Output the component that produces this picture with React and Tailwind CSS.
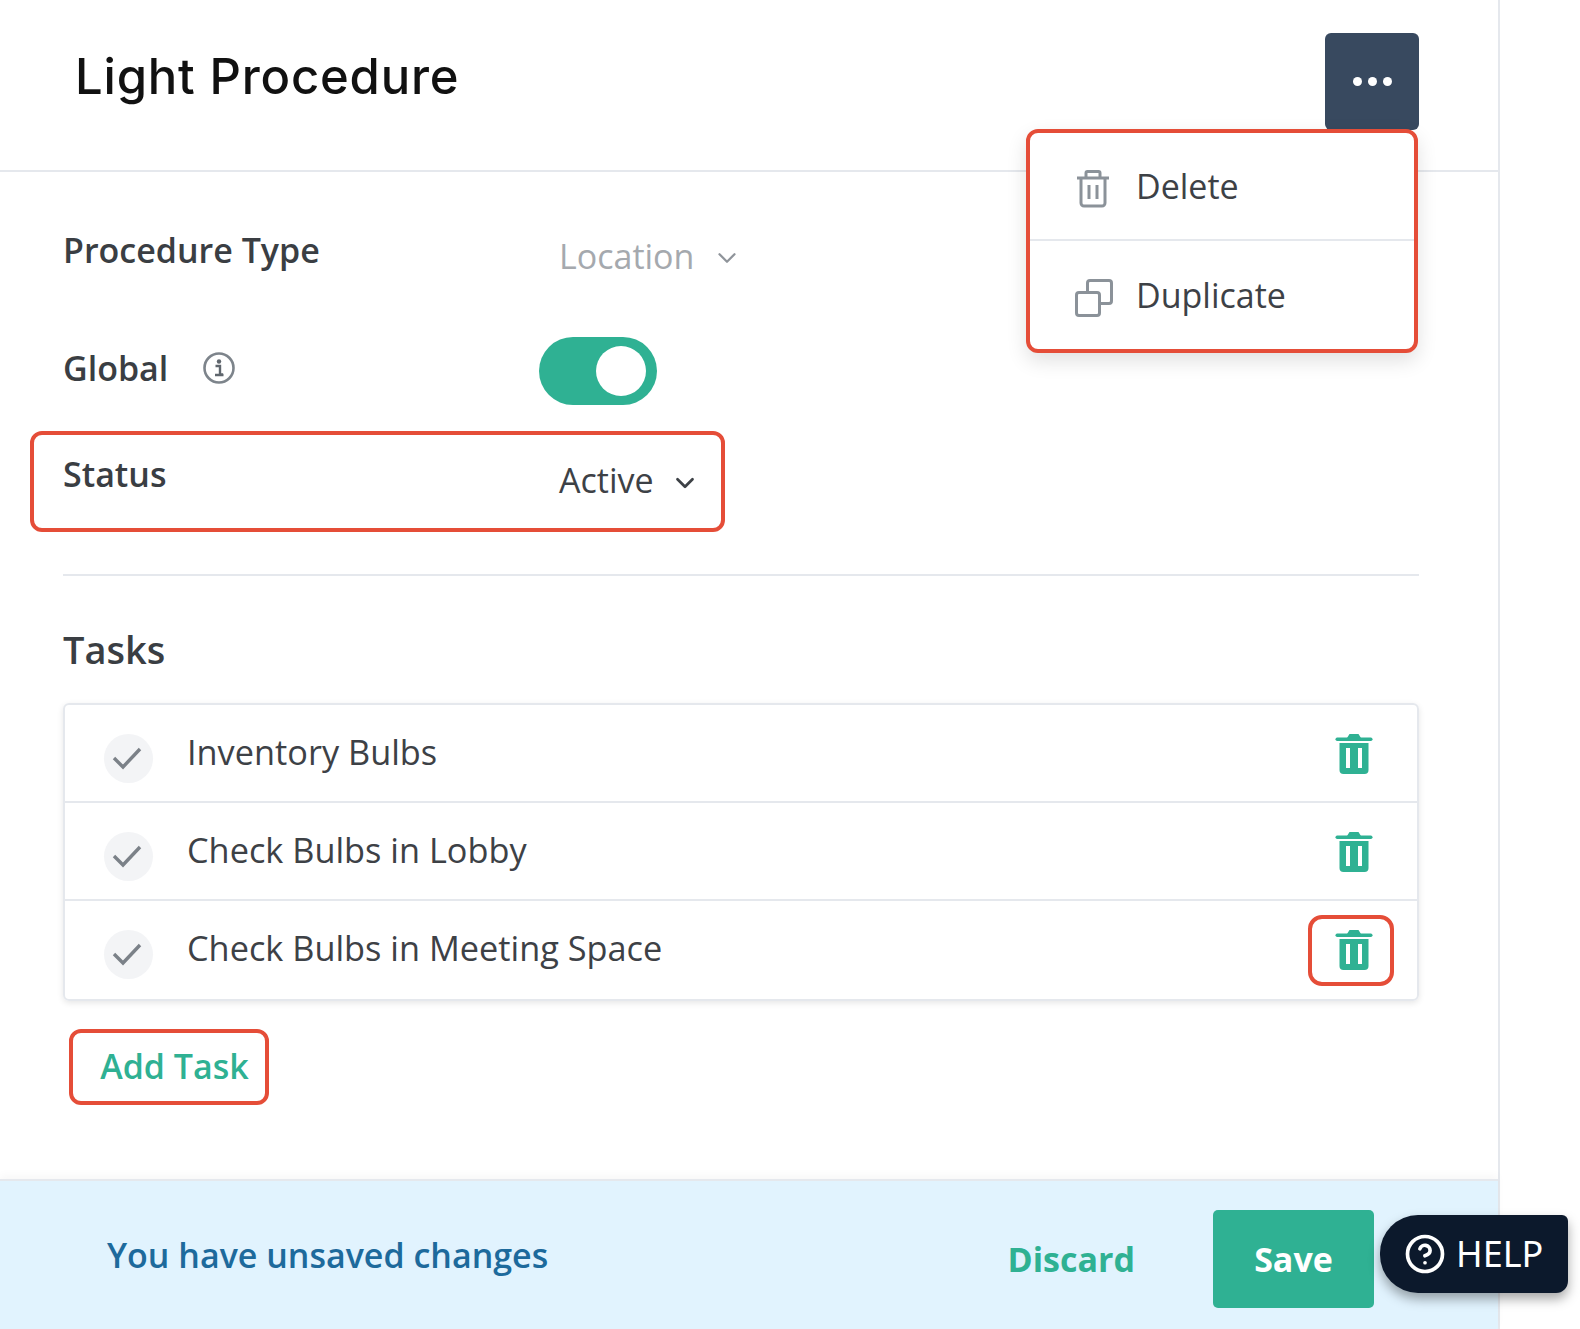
import { ChevronDown, CircleHelp } from "lucide-react";

const tasks = ["Inventory Bulbs", "Check Bulbs in Lobby", "Check Bulbs in Meeting Space"];

function SolidTrash() {
  return (
    <svg width="38" height="42" viewBox="0 0 38 42" fill="none">
      <path d="M12 5 L14.5 1 H23.5 L26 5 Z" fill="#2fb193" />
      <rect x="0.5" y="4.5" width="37" height="3.5" rx="1.7" fill="#2fb193" />
      <path d="M4.5 10 H33.5 V37 a4 4 0 0 1 -4 4 H8.5 a4 4 0 0 1 -4 -4 Z" fill="#2fb193" />
      <rect x="11" y="15" width="4" height="20" fill="#fff" />
      <rect x="23" y="15" width="4" height="20" fill="#fff" />
    </svg>
  );
}

function OutlineTrash() {
  return (
    <svg width="34" height="38" viewBox="0 0 34 38" fill="none" stroke="#8b9299" strokeWidth="3">
      <path d="M1 8 H33" />
      <path d="M10 8 V3 a1.5 1.5 0 0 1 1.5 -1.5 H22.5 a1.5 1.5 0 0 1 1.5 1.5 V8" />
      <path d="M5 8 V33 a3 3 0 0 0 3 3 H26 a3 3 0 0 0 3 -3 V8" />
      <path d="M13 15 V29 M21 15 V29" />
    </svg>
  );
}

function DuplicateIcon() {
  return (
    <svg width="38" height="38" viewBox="0 0 38 38" fill="none" stroke="#8b9299" strokeWidth="3">
      <rect x="1.5" y="13.5" width="23" height="23" rx="2.5" />
      <path d="M12.5 13 V4 a2.5 2.5 0 0 1 2.5 -2.5 H34 a2.5 2.5 0 0 1 2.5 2.5 V22 a2.5 2.5 0 0 1 -2.5 2.5 H25" />
    </svg>
  );
}

function InfoIcon() {
  return (
    <svg width="32" height="32" viewBox="0 0 32 32" fill="none">
      <circle cx="16" cy="16" r="14.5" stroke="#7d848b" strokeWidth="2.6" />
      <circle cx="16" cy="9.5" r="2.2" fill="#5f666d" />
      <path d="M12.5 14 H17 V22.5 H20 M12 23 H20.5" stroke="#5f666d" strokeWidth="2.4" />
    </svg>
  );
}

function CheckBadge() {
  return (
    <div className="flex h-[49px] w-[49px] shrink-0 items-center justify-center rounded-full bg-[#f3f4f6] pr-[4px]">
      <svg width="30" height="24" viewBox="0 0 30 24" fill="none">
        <path d="M2 12 L11 21 L28 3" stroke="#7b8188" strokeWidth="3.4" />
      </svg>
    </div>
  );
}

function TaskRow({ name, last }) {
  return (
    <div className={`flex h-[98px] items-center border-b-2 pl-[39px] pr-[44px] ${last ? "border-transparent" : "border-[#e5e8ed]"}`}>
      <div className="mt-[10px]"><CheckBadge /></div>
      <span className="ml-[34px] -mt-[2px] text-[34.3px] text-[#3d4146]">{name}</span>
      <div className={`ml-auto mt-[2px] flex items-center justify-center ${last ? "-mr-[21px] h-[71px] w-[86px] rounded-[14px] border-4 border-[#e54d38] pl-[6px]" : ""}`}>
        <SolidTrash />
      </div>
    </div>
  );
}

export default function App() {
  return (
    <div className="relative h-[1329px] w-[1580px] overflow-hidden bg-white font-['Open_Sans','Noto_Sans',sans-serif]">
      <div className="flex h-full w-[1500px] flex-col border-r-2 border-[#e5e8ed]">
        {/* Header */}
        <header className="flex h-[172px] shrink-0 items-start justify-between border-b-2 border-[#e5e8ed] pl-[75px] pr-[79px] pt-[33px]">
          <h1 className="mt-[11px] font-['Inter',sans-serif] text-[49px] font-medium leading-[66px] tracking-[0.8px] text-[#111]">Light Procedure</h1>
          <button className="flex h-[97px] w-[94px] items-center justify-center gap-[6px] rounded-[6px] bg-[#38495f]">
            <span className="h-[9px] w-[9px] rounded-full bg-white" />
            <span className="h-[9px] w-[9px] rounded-full bg-white" />
            <span className="h-[9px] w-[9px] rounded-full bg-white" />
          </button>
        </header>

        {/* Form */}
        <main className="flex-1 pl-[63px] pr-[79px]">
          <div className="mt-[56px] flex h-[44px] items-center">
            <span className="w-[496px] text-[34px] font-semibold text-[#3a3e43]">Procedure Type</span>
            <span className="mt-[12px] flex items-center text-[34px] text-[#a5a9ae]">
              Location
              <ChevronDown className="ml-[18px] mt-[4px] h-[30px] w-[30px] text-[#8f949a]" strokeWidth={1.8} />
            </span>
          </div>

          <div className="mt-[65px] flex h-[68px] items-center">
            <div className="-mt-[6px] flex w-[476px] items-center">
              <span className="text-[34px] font-semibold text-[#3a3e43]">Global</span>
              <span className="ml-[35px]"><InfoIcon /></span>
            </div>
            <div className="flex h-[68px] w-[118px] items-center justify-end rounded-full bg-[#2fb193] pr-[11px]">
              <span className="h-[50px] w-[50px] rounded-full bg-white" />
            </div>
          </div>

          <div className="-ml-[33px] mt-[26px] flex h-[101px] w-[695px] items-start rounded-[12px] border-4 border-[#e54d38] pl-[29px]">
            <span className="mt-[14px] w-[496px] text-[34px] font-semibold text-[#3a3e43]">Status</span>
            <span className="mt-[20px] flex items-center text-[34px] text-[#3d4146]">
              Active
              <ChevronDown className="ml-[16px] mt-[4px] h-[30px] w-[30px] text-[#3d4146]" strokeWidth={2.2} />
            </span>
          </div>

          <div className="mt-[42px] border-t-2 border-[#e5e8ed]" />

          <h2 className="mt-[47px] text-[38px] font-semibold leading-[52px] text-[#3a3e43]">Tasks</h2>

          <div className="mt-[28px] rounded-[6px] border-2 border-[#e5e8ed] shadow-[0_2px_6px_rgba(0,0,0,0.1)]">
            {tasks.map((t, i) => (
              <TaskRow key={t} name={t} last={i === tasks.length - 1} />
            ))}
          </div>

          <button className="ml-[6px] mt-[28px] flex h-[76px] w-[200px] items-center justify-center rounded-[12px] border-4 border-[#e54d38] pb-[2px] pl-[11px] text-[34px] font-semibold text-[#2fb193]">
            Add Task
          </button>
        </main>

        {/* Unsaved changes bar */}
        <footer className="flex h-[150px] shrink-0 items-start border-t-2 border-[#e5e8ed] bg-[#e1f3fe] pl-[107px] pr-[124px] shadow-[0_-4px_8px_rgba(0,0,0,0.03)]">
          <span className="mt-[49px] text-[34px] font-semibold text-[#1d6a9c]">You have unsaved changes</span>
          <span className="ml-auto mt-[53px] text-[34px] font-bold text-[#2fb193]">Discard</span>
          <button className="ml-[78px] mt-[29px] h-[98px] w-[161px] rounded-[5px] bg-[#2fb193] text-[34px] font-bold text-white">Save</button>
        </footer>
      </div>

      {/* Dropdown menu */}
      <div className="absolute left-[1026px] top-[129px] w-[392px] overflow-hidden rounded-[12px] border-4 border-[#e54d38] bg-white shadow-[0_8px_20px_rgba(0,0,0,0.12)]">
        <div className="flex h-[108px] items-center border-b-2 border-[#e5e8ed] pl-[46px]">
          <span className="mt-[6px]"><OutlineTrash /></span>
          <span className="ml-[26px] text-[34px] text-[#3d4146]">Delete</span>
        </div>
        <div className="flex h-[108px] items-center pl-[45px]">
          <span className="mt-[6px]"><DuplicateIcon /></span>
          <span className="ml-[23px] text-[34px] text-[#3d4146]">Duplicate</span>
        </div>
      </div>

      {/* Help pill */}
      <div className="absolute left-[1380px] top-[1215px] flex h-[78px] w-[188px] items-center rounded-bl-[38px] rounded-br-[12px] rounded-tl-[38px] rounded-tr-[6px] bg-[#0c192c] pl-[24px] shadow-[0_6px_12px_rgba(0,0,0,0.35)]">
        <CircleHelp className="h-[42px] w-[42px] text-white" strokeWidth={2.1} />
        <span className="ml-[10px] font-['Noto_Sans',sans-serif] text-[36px] text-white">HELP</span>
      </div>
    </div>
  );
}
